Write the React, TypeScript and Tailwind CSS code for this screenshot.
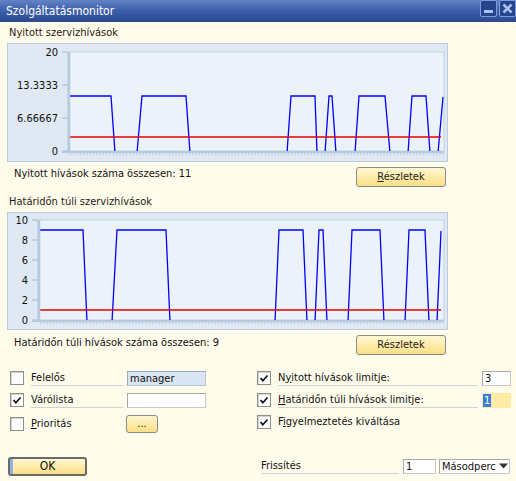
import React from 'react'

type Pt = [number, number]

const FONT = "font-['Tahoma','DejaVu_Sans_Condensed','DejaVu_Sans',sans-serif]"

// zero points sit under the x axis, like in the original control
const BLUE_1: Pt[] = [
  [68, 96], [111, 96], [115, 153], [137, 153], [142, 96], [186, 96], [190, 153],
  [287, 153], [291, 96], [315, 96], [317, 153], [325, 153], [329, 96], [332, 96], [336, 153],
  [355, 153], [359, 96], [385, 96], [390, 153], [408, 153], [412, 96], [426, 96], [430, 153],
  [438, 153], [443, 97],
]

const BLUE_2: Pt[] = [
  [38, 230], [83, 230], [87, 322], [112, 322], [117, 230], [166, 230], [170, 322],
  [275, 322], [279, 230], [303, 230], [307, 322], [315, 322], [319, 230], [323, 230], [327, 322],
  [348, 322], [352, 230], [380, 230], [384, 322], [405, 322], [409, 230], [425, 230], [429, 322],
  [437, 322], [441, 231],
]

type ChartProps = {
  id: string
  x0: number
  y0: number
  h: number
  left: number
  top: number
  bottom: number
  labels: { y: number; t: string }[]
  blue: Pt[]
  red: number
}

function Chart({ id, x0, y0, h, left, top, bottom, labels, blue, red }: ChartProps) {
  const right = 444
  return (
    <div className="ml-[7px] w-[441px] border border-[#b9cbde] bg-[#dfe8f3]" style={{ height: h }}>
      <svg width={441} height={h} className="-m-px block">
        <defs>
          <clipPath id={id}>
            <rect x={left} y={top - 3} width={right - left} height={bottom - top + 3} />
          </clipPath>
        </defs>
        <g transform={`translate(${-x0},${-y0})`}>
          <rect x={left} y={top} width={right - left} height={bottom - top} fill="#ebf2fa" stroke="#c2d2e4" />
          <g clipPath={`url(#${id})`}>
            <polyline points={blue.map(p => p.join(',')).join(' ')} fill="none" stroke="#0000ff" strokeWidth={1.3} />
          </g>
          <line x1={left} y1={red} x2={441} y2={red} stroke="#e00000" strokeWidth={1.3} />
          <line x1={left + 1} y1={top} x2={left + 1} y2={bottom + 2} stroke="#b6c9dd" strokeWidth={2.5} />
          <line x1={left - 6} y1={bottom + 1} x2={right} y2={bottom + 1} stroke="#b6c9dd" strokeWidth={2} />
          <line x1={left + 2} y1={bottom + 3} x2={right} y2={bottom + 3} stroke="#b6c9dd" strokeWidth={2} strokeDasharray="1 2.3" />
          {labels.map(l => (
            <g key={l.t}>
              <line x1={left - 6} y1={l.y} x2={left} y2={l.y} stroke="#b6c9dd" strokeWidth={1.5} />
              <text x={left - 10} y={l.y + 4} textAnchor="end" fontSize={11} fill="#111"
                fontFamily="Tahoma, 'DejaVu Sans Condensed', 'DejaVu Sans', sans-serif">{l.t}</text>
            </g>
          ))}
        </g>
      </svg>
    </div>
  )
}

function YellowBtn({ children, className = '' }: { children: React.ReactNode; className?: string }) {
  return (
    <div className={`flex items-center justify-center rounded-[3px] border border-[#8a8a8a] bg-gradient-to-b from-[#fff8d6] via-[#fdeba8] to-[#fadf84] text-[11px] text-[#222] ${className}`}>
      {children}
    </div>
  )
}

function Check({ checked }: { checked?: boolean }) {
  return (
    <span className="flex h-[14px] w-[14px] shrink-0 items-center justify-center border border-[#8f8f8f] bg-white shadow-[inset_1px_1px_0_#d4d4d4]">
      {checked && (
        <svg width="10" height="10" viewBox="0 0 10 10">
          <path d="M1.5 5 L3.8 7.8 L8.5 2.5" fill="none" stroke="#111" strokeWidth={1.7} />
        </svg>
      )}
    </span>
  )
}

export default function App() {
  return (
    <div className={`relative h-[481px] w-[516px] overflow-hidden bg-[#fffcec] text-[11px] text-[#111] ${FONT}`}>
      {/* title bar */}
      <div className="flex h-[22px] items-start justify-between bg-gradient-to-b from-[#6283c6] via-[#3c5eaa] to-[#2b4990]">
        <span className="pl-[6px] pt-[3px] text-[12px] leading-[16px] text-white">Szolgáltatásmonitor</span>
        <div className="flex gap-[2px]">
          <div className="flex h-[17px] w-[17px] items-end justify-center rounded-[2px] border border-[#7f9dd8] bg-[#25448c] pb-[3px]">
            <div className="h-[3px] w-[9px] bg-[#a9c4f2]" />
          </div>
          <div className="flex h-[17px] w-[17px] items-center justify-center rounded-[2px] border border-[#7f9dd8] bg-[#25448c]">
            <svg width="11" height="11" viewBox="0 0 11 11">
              <path d="M1.5 1.5 L9.5 9.5 M9.5 1.5 L1.5 9.5" stroke="#a9c4f2" strokeWidth={2.6} />
            </svg>
          </div>
        </div>
      </div>

      <div className="h-[21px] pl-[9px] pt-[4px] leading-[14px] text-[#2a1a10]">Nyitott szervizhívások</div>

      <Chart id="c1" x0={7} y0={43} h={119} left={68} top={52} bottom={151}
        labels={[{ y: 52, t: '20' }, { y: 85, t: '13.3333' }, { y: 118, t: '6.66667' }, { y: 151, t: '0' }]}
        blue={BLUE_1} red={137} />

      <div className="mt-[5px] flex h-[20px] items-start">
        <span className="pl-[14px] leading-[14px]">Nyitott hívások száma összesen: 11</span>
        <YellowBtn className="ml-auto mr-[70px] h-[20px] w-[90px]"><span><u>R</u>észletek</span></YellowBtn>
      </div>

      <div className="h-[25px] pl-[9px] pt-[8px] leading-[14px] text-[#2a1a10]">Határidőn túli szervizhívások</div>

      <Chart id="c2" x0={7} y0={212} h={118} left={38} top={220} bottom={320}
        labels={[0, 2, 4, 6, 8, 10].map(v => ({ y: 320 - v * 10, t: String(v) }))}
        blue={BLUE_2} red={310} />

      <div className="mt-[5px] flex h-[20px] items-start">
        <span className="pl-[14px] pt-px leading-[14px]">Határidőn túli hívások száma összesen: 9</span>
        <YellowBtn className="ml-auto mr-[70px] h-[20px] w-[90px]">Részletek</YellowBtn>
      </div>

      {/* options */}
      <div className="mt-[16px] flex">
        <div className="ml-[10px] flex w-[247px] flex-col gap-[8px]">
          <div className="flex h-[14px] items-center">
            <Check />
            <span className="ml-[7px] w-[92px] border-b border-[#d2d2d2] leading-[14px]">Felelős</span>
            <span className="ml-[4px] h-[15px] w-[79px] border border-[#b7c4d6] border-l-[#98a8be] border-t-[#98a8be] bg-[#dae5f3] pl-[2px] leading-[13px]">manager</span>
          </div>
          <div className="flex h-[14px] items-center">
            <Check checked />
            <span className="ml-[7px] w-[92px] border-b border-[#d2d2d2] leading-[14px]">Várólista</span>
            <span className="ml-[4px] h-[15px] w-[79px] border border-[#c9c9c9] border-l-[#a8a8a8] border-t-[#a8a8a8] bg-white" />
          </div>
          <div className="flex h-[18px] items-center">
            <Check />
            <span className="ml-[7px] w-[92px] leading-[14px]"><u>P</u>rioritás</span>
            <YellowBtn className="ml-[3px] h-[18px] w-[32px] leading-[10px]">...</YellowBtn>
          </div>
        </div>

        <div className="flex w-[254px] flex-col gap-[8px]">
          <div className="flex h-[14px] items-center">
            <Check checked />
            <span className="ml-[7px] w-[200px] border-b border-[#d2d2d2] leading-[14px]">N<u>y</u>itott hívások limitje:</span>
            <span className="ml-[4px] h-[15px] w-[29px] border border-[#c9c9c9] border-l-[#a8a8a8] border-t-[#a8a8a8] bg-white pl-[2px] leading-[13px]">3</span>
          </div>
          <div className="flex h-[14px] items-center">
            <Check checked />
            <span className="ml-[7px] w-[200px] border-b border-[#d2d2d2] leading-[14px]"><u>H</u>atáridőn túli hívások limitje:</span>
            <span className="ml-[4px] flex h-[15px] w-[29px] items-center bg-[#fdeba6] pl-[1px]">
              <span className="bg-[#3b7bd9] px-[1px] leading-[13px] text-white">1</span>
            </span>
          </div>
          <div className="flex h-[14px] items-center">
            <Check checked />
            <span className="ml-[7px] leading-[14px]">F<u>i</u>gyelmeztetés kiváltása</span>
          </div>
        </div>
      </div>

      {/* bottom */}
      <div className="mt-[24px] flex h-[18px] items-center">
        <div className="relative ml-[8px] flex h-[19px] w-[79px] items-center justify-center overflow-hidden rounded-[3px] border-2 border-[#6a6a6a] bg-gradient-to-b from-[#fff8d6] via-[#fdeba8] to-[#fadf84] text-[12px]">
          <span className="absolute bottom-0 left-0 top-0 w-[3px] bg-[#8fb1e3]" />
          OK
        </div>
        <span className="ml-[174px] w-[138px] border-b border-[#d2d2d2] leading-[14px]">Frissítés</span>
        <span className="ml-[4px] h-[15px] w-[33px] border border-[#c9c9c9] border-l-[#a8a8a8] border-t-[#a8a8a8] bg-white pl-[2px] leading-[13px]">1</span>
        <span className="ml-[3px] flex h-[15px] w-[71px] items-center border border-[#c9c9c9] border-l-[#a8a8a8] border-t-[#a8a8a8] bg-white">
          <span className="w-[57px] overflow-hidden whitespace-nowrap pl-[2px] leading-[13px]">Másodperc</span>
          <svg width="11" height="6" viewBox="0 0 11 6" className="ml-px">
            <path d="M1 0.5 H10 L5.5 5.5 Z" fill="#333" />
          </svg>
        </span>
      </div>
    </div>
  )
}
